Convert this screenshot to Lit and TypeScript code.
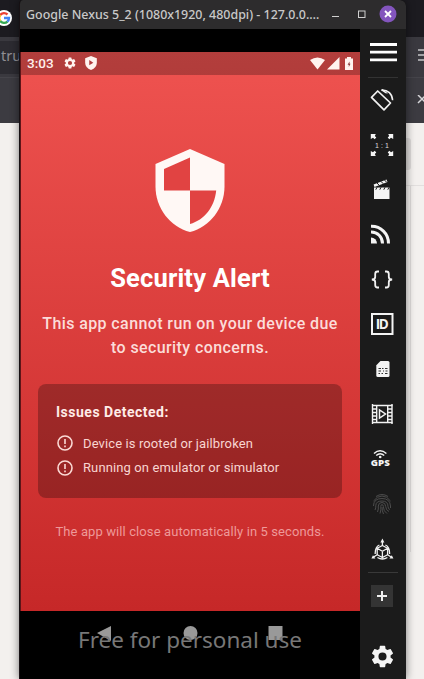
import { LitElement, html, css, svg } from "lit";
import { customElement } from "lit/decorators.js";

const stroke = (body: unknown, size = 24, cls = "") =>
  html`<svg class=${cls} width=${size} height=${size} viewBox="0 0 24 24" fill="none" stroke="#f2f2f2" stroke-width="1.6">${body}</svg>`;
const solid = (body: unknown, size = 24) =>
  html`<svg width=${size} height=${size} viewBox="0 0 24 24" fill="#f4f4f4">${body}</svg>`;

const GEAR =
  "M19.14 12.94c.04-.3.06-.61.06-.94s-.02-.64-.07-.94l2.03-1.58a.49.49 0 0 0 .12-.61l-1.92-3.32a.49.49 0 0 0-.59-.22l-2.39.96a7 7 0 0 0-1.62-.94l-.36-2.54a.48.48 0 0 0-.48-.41h-3.84c-.24 0-.43.17-.47.41l-.36 2.54c-.59.24-1.13.57-1.62.94l-2.39-.96a.48.48 0 0 0-.59.22L2.74 8.87a.48.48 0 0 0 .12.61l2.03 1.58c-.05.3-.09.63-.09.94s.02.64.07.94l-2.03 1.58a.49.49 0 0 0-.12.61l1.92 3.32c.12.22.37.29.59.22l2.39-.96c.5.38 1.03.7 1.62.94l.36 2.54c.05.24.24.41.48.41h3.84c.24 0 .44-.17.47-.41l.36-2.54c.59-.24 1.13-.56 1.62-.94l2.39.96c.22.08.47 0 .59-.22l1.92-3.32a.48.48 0 0 0-.12-.61zM12 15.6a3.6 3.6 0 1 1 0-7.2 3.6 3.6 0 0 1 0 7.2z";

const rotate = stroke(svg`<path d="M1.500 9.400L7.700 3 20.500 15 14 21.800z" stroke-linejoin="round" stroke-width="1.700"/><path d="M11.500 1.900C18 1.600 22.300 6 22.600 12.300" stroke-width="1.500"/><path d="M12.500 1l5.500 4.500-2.500-.2L11 2.200z" fill="#f2f2f2" stroke="none"/>`);
const scale = html`<svg width="24" height="24" viewBox="0 0 24 24" fill="#f4f4f4"><path d="M.8 1h5L4.800 3l1.500 1.500-1.600 1.700-1.700-1.500-2.200 1.300zM23.200 1h-5l1 2-1.500 1.500 1.600 1.700L21 4.700 23.200 6zM.8 23h5l-1-2 1.500-1.500-1.600-1.700L3 19.300.8 18zM23.200 23h-5l1-2-1.500-1.500 1.600-1.700 1.700 1.500 2.200-1.300z"/><text x="12" y="14.600" font-size="7" fill="#ddd" font-family="Liberation Sans, sans-serif" text-anchor="middle" textLength="14">1:1</text></svg>`;
const clapper = solid(svg`<path d="M4 9.500h15.500V21H4zM3.600 6.600L16.500 1.600l1 2.500L4.500 9z"/><path d="M7 5l2.200 2.300M11 3.400l2.200 2.300M14.500 2l2.200 2.300M7 9.300l-1.200 2.400M11 9.300l-1.200 2.400M15 9.300l-1.200 2.400M19 9.300l-1.200 2.400" stroke="#1b1b1b" stroke-width="1"/>`);
const cast = html`<svg width="24" height="24" viewBox="0 0 24 24" fill="none" stroke="#f4f4f4" stroke-width="3"><path d="M1 3.200A17 17 0 0 1 18.500 20.500M1 9A11.300 11.300 0 0 1 12.500 20.500"/><path d="M1 14.500a6 6 0 0 1 6 6H1z" fill="#f4f4f4" stroke="none"/></svg>`;
const braces = stroke(svg`<path d="M9 3.500H7.500Q5.200 3.500 5.200 6v3q0 2.500-3.400 2.500Q5.200 11.500 5.200 14v3q0 2.500 2.300 2.500H9M15 3.500h1.500q2.300 0 2.300 2.500v3q0 2.500 3.400 2.500-3.400 0-3.400 2.500v3q0 2.500-2.300 2.500H15" stroke-width="1.800"/>`);
const ident = html`<svg width="24" height="24" viewBox="0 0 24 24"><rect x="2" y="2" width="20.500" height="20" fill="none" stroke="#f4f4f4" stroke-width="2"/><text x="12.200" y="16.800" fill="#f4f4f4" font-size="13.500" font-weight="700" font-family="Open Sans, sans-serif" text-anchor="middle" textLength="13">ID</text></svg>`;
const sim = html`<svg width="24" height="24" viewBox="0 0 24 24"><path d="M10.500 4h7.500q1.500 0 1.500 1.500v13q0 1.500-1.500 1.500H7.800q-1.500 0-1.500-1.500V8.200z" fill="#f4f4f4"/><path d="M8.500 11.500h2.500M12 11.500h1.500M15 11.500h2.500M8.500 14h2.500M13 14h1M15.500 14h2M8.500 16.500h1.500M11.500 16.500H13M15 16.500h2.500" stroke="#333" fill="none"/></svg>`;
const film = stroke(svg`<path d="M6.700 3v18M17.700 3v18M2.500 2v20M22 2v20" stroke-width="1.400"/><path d="M2 3.500h20.500M2 20.500h20.500" stroke-width="1.600"/><path d="M2 7h4M2 10.500h4M2 14h4M2 17.500h4M18 7h4M18 10.500h4M18 14h4M18 17.500h4" stroke-width="1.500"/><path d="M9.500 8v8l6-4z" stroke-width="1.500"/>`);
const gps = html`<svg width="24" height="24" viewBox="0 0 24 24"><g fill="none" stroke="#f4f4f4" stroke-width="1.500"><path d="M4 6.500q6-5.400 12.400 0M6.200 8.500q4-3.500 8 0"/></g><circle cx="10.200" cy="10" r="1.300" fill="#f4f4f4"/><text x="10.300" y="19.300" fill="#f4f4f4" font-size="8.500" font-weight="800" font-family="Open Sans, sans-serif" text-anchor="middle" textLength="19" lengthAdjust="spacingAndGlyphs">GPS</text></svg>`;
const finger = html`<svg width="24" height="24" viewBox="0 0 24 24" fill="none" stroke="#4c4c4c" stroke-width="1"><path d="M6 4.500q6-4 12 0M3.500 9Q7 4 12 4t8.500 5M3.500 14Q3.500 6.500 12 6.500 20 6.500 20.500 14v2M5 18q1-2 .8-4.500Q6 9 12 9t6 5.500q.2 3 2 3M7.500 20q1.200-3 .8-6 .2-3.500 3.700-3.500t3.700 4q.3 4 3.300 5M10 21.500q1.300-4 .8-7 .1-2 1.200-2t1.300 2q.2 5 3.700 7M13.500 22Q12 19 12 15"/></svg>`;
const cube = stroke(svg`<g transform="translate(.4 2.500)"><path d="M12 2v4M12 6l5.200 2.800v6.400L12 18l-5.200-2.800V8.800zM6.800 8.800l5.200 3 5.200-3M12 11.800V18M6.800 15.200l-4 2.500M17.200 15.200l4 2.500M9 5.500Q4.500 7.500 4.800 14.500M15 5.500q4.500 2 4.200 9M7 18q5 3 10 0" stroke-width="1.300"/><path d="M12-1l2 4h-4zM1 19l1.600-3.200L5 19zM23 19l-1.600-3.200L19 19z" fill="#f2f2f2" stroke="none"/></g>`);

@customElement("app-root")
export class AppRoot extends LitElement {
  static styles = css`
    * { box-sizing: border-box; }
    :host { display: block; position: relative; width: 424px; height: 679px; overflow: hidden; background: #f3f0ee; font-family: Roboto, sans-serif; }
    svg { display: block; flex: none; }
    .backdrop { display: flex; flex-direction: column; height: 100%; }
    .tabs { height: 37px; background: #1c1b20; display: flex; align-items: center; }
    .google { margin: -1px 0 0 -4px; }
    .address { height: 41px; background: #3a393f; display: flex; align-items: center; justify-content: space-between; border-bottom: 1px solid #45444a; }
    .field { width: 60px; height: 33px; background: #2c2b31; color: #8f8e93; font: 14.500px/28px "Noto Sans", sans-serif; padding-left: 1px; }
    .book { height: 45px; background: #3c3b41; display: flex; align-items: center; justify-content: flex-end; }
    .page { flex: 1; display: flex; flex-direction: column; align-items: flex-end; padding-top: 15px; }
    .chip { width: 13px; height: 32px; margin-right: 13px; background: #dedbda; border-radius: 3px; }
    .panel-top { width: 18px; height: 1px; margin-top: 15px; background: #e2dfde; }
    .panel-side { width: 1px; height: 366px; margin-right: 13px; background: #dfdcdb; }
    .window { position: absolute; left: 19px; top: 0; width: 387px; height: 679px; display: flex; flex-direction: column; background: #000; box-shadow: 0 0 9px rgba(0,0,0,.5); border-radius: 4px 6px 0 0; border-left: 1px solid #171114; overflow: hidden; }
    .title { height: 28.500px; flex: none; background: #2d2c2d; display: flex; align-items: center; padding: 0 9px 0 6px; color: #c9c9c9; }
    .name { font: 500 12.450px "Noto Sans", sans-serif; white-space: nowrap; width: 307px; }
    .controls { display: flex; align-items: center; }
    .body { flex: 1; display: flex; min-height: 0; }
    .device { width: 340px; display: flex; flex-direction: column; padding-top: 23.500px; }
    .screen { height: 558.500px; background: linear-gradient(#ef5350, #c62828); border-left: 1px solid #5d1518; display: flex; flex-direction: column; }
    .status { height: 22.500px; flex: none; background: rgba(0,0,0,.25); color: #fff0ec; display: flex; align-items: center; padding: 0 5px 0 6px; }
    .clock { font: 500 13.500px Roboto, sans-serif; width: 36px; }
    .status-left { display: flex; gap: 7px; flex: 1; }
    .status-right { display: flex; gap: 2px; align-items: center; }
    .alert { display: flex; flex-direction: column; align-items: center; padding: 65px 18px 0 17px; color: #fff3f0; }
    h1 { font: 700 25.500px/32px Roboto, sans-serif; letter-spacing: .18px; margin: 21px 0 0; color: #fff; }
    .lead { font: 500 16px/24px Roboto, sans-serif; letter-spacing: .4px; margin: 18.500px 0 0; text-align: center; color: #fbdcd9; white-space: nowrap; }
    .card { align-self: stretch; height: 114px; margin-top: 24px; border-radius: 8px; background: rgba(0,0,0,.26); padding: 18px; }
    h2 { font: 700 14px/20px Roboto, sans-serif; letter-spacing: .5px; margin: 0 0 9px; color: #ffebe7; }
    .issue { display: flex; align-items: center; gap: 9px; height: 24.500px; font-size: 13px; letter-spacing: .11px; color: #f8d5d1; }
    .closing { font-size: 13px; line-height: 20px; letter-spacing: .1px; margin-top: 24px; color: #ee9999; white-space: nowrap; }
    .nav { flex: 1; display: grid; justify-items: center; align-items: start; }
    .nav > * { grid-area: 1 / 1; }
    .keys { display: flex; width: 186px; justify-content: space-between; margin: 14px 0 0 0; }
    .mark { font: 22.500px/30px "Noto Sans", sans-serif; color: #777; margin-top: 14px; white-space: nowrap; z-index: 1; }
    .tools { width: 46px; background: #1b1b1b; display: flex; flex-direction: column; align-items: center; padding-right: 1px; }
    .menu { height: 49px; padding: 13px 1px 0 0; width: 30px; border-bottom: 1px solid #333; display: flex; justify-content: flex-end; }
    .tool { height: 45px; display: grid; place-items: center; }
    .list { display: flex; flex-direction: column; width: 30px; height: 495px; padding-right: 2px; border-bottom: 1px solid #393939; align-items: center; }
    .plus { width: 22px; height: 22px; background: #343434; display: grid; place-items: center; margin: 12px 1px 36.500px 0; }
  `;

  render() {
    const tools = [rotate, scale, clapper, cast, braces, ident, sim, film, gps, finger, cube];
    const issues = ["Device is rooted or jailbroken", "Running on emulator or simulator"];
    return html`
      <div class="backdrop">
        <div class="tabs"><svg class="google" width="16" height="16" viewBox="0 0 16 16"><circle cx="8" cy="8" r="8" fill="#fff"/><g fill="none" stroke-width="2.400"><path d="M4.200 5A5 5 0 0 1 11.500 4.500" stroke="#ea4335"/><path d="M4.200 11A5 5 0 0 1 4.200 5" stroke="#fbbc05"/><path d="M4.200 11A5 5 0 0 0 11.500 11.600" stroke="#34a853"/><path d="M8 8h5a5 5 0 0 1-1.700 3.700" stroke="#4285f4"/></g></svg></div>
        <div class="address"><div class="field">tru</div><svg width="7" height="16" viewBox="0 0 7 16" stroke="#c5c5c8" stroke-width="1.300"><path d="M1 1h6M1 6h6M1 11h6"/></svg></div>
        <div class="book"><svg width="7" height="12" viewBox="0 0 7 12" stroke="#d5d5d8" stroke-width="1.500"><path d="M1 0l8 8M1 8l8-8"/></svg></div>
        <div class="page"><div class="chip"></div><div class="panel-top"></div><div class="panel-side"></div></div>
      </div>
      <div class="window">
        <div class="title"><span class="name">Google Nexus 5_2 (1080x1920, 480dpi) - 127.0.0.…</span>
          <div class="controls"><svg width="67" height="20" viewBox="0 0 67 20" fill="none" stroke="#d0d0d0"><path d="M2 12.500h7"/><rect x="28.500" y="7" width="6.500" height="6.500"/><circle cx="58" cy="10" r="8.500" fill="#8355bd" stroke="none"/><path d="M55 7l6 6M55 13l6-6" stroke="#fff" stroke-width="1.800"/></svg></div>
        </div>
        <div class="body">
          <div class="device">
            <div class="screen">
              <div class="status"><span class="clock">3:03</span>
                <div class="status-left"><svg width="14" height="14" viewBox="0 0 24 24" fill="#fff3ef"><path d=${GEAR}/></svg>
                <svg width="14" height="14" viewBox="0 0 24 24"><path d="M12 0l10 4v7.500Q22 20 12 24 2 20 2 11.500V4z" fill="#fff3ef"/><path d="M9 7v9l7-4.500z" fill="#b23c3e"/></svg></div>
                <div class="status-right"><svg width="15" height="13" viewBox="0 0 15 13" fill="#fff3ef"><path d="M0 3Q7.500-2 15 3L7.500 12.500z"/></svg><svg width="13" height="13" viewBox="0 0 13 13" fill="#fff3ef"><path d="M0 12.500L12.500 0v12.500z"/></svg><svg width="13" height="13" viewBox="0 0 13 13"><path d="M3 1.500h2V0h4v1.500h2V13H3z" fill="#fff3ef"/><path d="M7.500 4.500L5.600 7.700h1.200V10l1.700-3.200H7.500z" fill="#8a3a3c"/></svg></div>
              </div>
              <div class="alert">
                <svg width="92" height="101" viewBox="0 0 92 101"><path d="M46 9L80.500 24v22.500C80.500 68 66 87 46 92 26 87 11.500 68 11.500 46.500V24z" fill="#fff8f5"/><path d="M46 17.500L20 29v21.500h26zM46 50.500h26.200C70.500 67 60.500 80 46 84z" fill="#e14342"/></svg>
                <h1>Security Alert</h1>
                <p class="lead">This app cannot run on your device due<br>to security concerns.</p>
                <div class="card"><h2>Issues Detected:</h2>${issues.map((t) => html`<div class="issue"><svg width="18" height="18" viewBox="0 0 18 18" fill="none" stroke="#fbd9d4" stroke-width="1.600"><circle cx="9" cy="9" r="7"/><path d="M9 5v5M9 11.500v1.700"/></svg>${t}</div>`)}</div>
                <div class="closing">The app will close automatically in 5 seconds.</div>
              </div>
            </div>
            <div class="nav">
              <div class="keys"><svg width="15" height="16" viewBox="0 0 15 16" fill="#999"><path d="M14 1v15L0 8z"/></svg><svg width="15" height="16" viewBox="0 0 15 16" fill="#999"><circle cx="7.500" cy="8" r="7"/></svg><svg width="15" height="16" viewBox="0 0 15 16" fill="#999"><path d="M.5 1h14v14H.5z"/></svg></div>
              <div class="mark">Free for personal use</div>
            </div>
          </div>
          <div class="tools">
            <div class="menu"><svg width="28" height="20" viewBox="0 0 28 20" stroke="#fff" stroke-width="2.800"><path d="M1 2.500h27M1 10.200h27M1 17.800h27"/></svg></div>
            <div class="list">${tools.map((t) => html`<div class="tool">${t}</div>`)}</div>
            <div class="plus"><svg width="12" height="12" viewBox="0 0 12 12" stroke="#eee" stroke-width="2"><path d="M6 1v10M1 6h10"/></svg></div>
            ${solid(svg`<path d=${GEAR}/>`, 27)}
          </div>
        </div>
      </div>`;
  }
}
